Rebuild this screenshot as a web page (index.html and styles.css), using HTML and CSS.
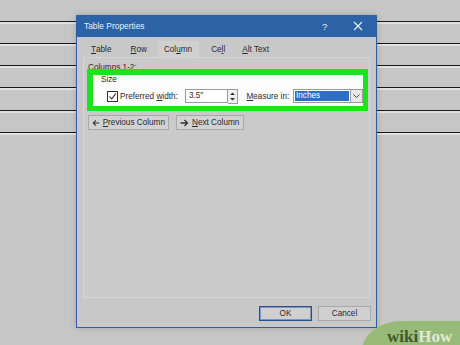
FILE: index.html
```html
<!DOCTYPE html>
<html>
<head>
<meta charset="utf-8">
<link rel="stylesheet" href="styles.css">
</head>
<body>
<div class="page">
  <div class="dialog">
    <div class="titlebar">
      <span class="title">Table Properties</span>
      <span class="tb-help">?</span>
      <span class="tb-close">
        <svg width="10" height="10" viewBox="0 0 10 10"><path d="M1 1L9 9M9 1L1 9" stroke="#e6eef8" stroke-width="1.2" fill="none"/></svg>
      </span>
    </div>
    <div class="tabs">
      <span class="tab t-table"><u>T</u>able</span>
      <span class="tab t-row"><u>R</u>ow</span>
      <span class="tab t-col active">Col<u>u</u>mn</span>
      <span class="tab t-cell">Ce<u>l</u>l</span>
      <span class="tab t-alt"><u>A</u>lt Text</span>
    </div>
    <div class="panel">
      <div class="cols-label">Columns 1-2:</div>
      <div class="highlight">
        <div class="size-label">Size</div>
        <div class="size-row">
          <span class="checkbox">
            <svg width="9" height="9" viewBox="0 0 9 9"><path d="M1.5 4.5L3.7 7L7.8 1.5" stroke="#222" stroke-width="1.1" fill="none"/></svg>
          </span>
          <span class="lbl-pref">Preferred <u>w</u>idth:</span>
          <span class="input">3.5"</span>
          <span class="spinner">
            <svg width="9" height="13" viewBox="0 0 9 13"><path d="M2 5L4.5 2.5L7 5Z M2 8L4.5 10.5L7 8Z" fill="#333"/></svg>
          </span>
          <span class="lbl-measure"><u>M</u>easure in:</span>
          <span class="select"><span class="sel-text">Inches</span></span>
          <span class="dropbtn">
            <svg width="9" height="6" viewBox="0 0 9 6"><path d="M1.5 1.5L4.5 4.5L7.5 1.5" stroke="#444" stroke-width="1" fill="none"/></svg>
          </span>
        </div>
      </div>
      <div class="nav-row">
        <span class="navbtn prev">
          <svg width="9" height="8" viewBox="0 0 9 8"><path d="M8.5 4H1.5M4.5 1L1.5 4L4.5 7" stroke="#333" stroke-width="1.3" fill="none"/></svg>
          <span><u>P</u>revious Column</span>
        </span>
        <span class="navbtn next">
          <svg width="9" height="8" viewBox="0 0 9 8"><path d="M0.5 4H7.5M4.5 1L7.5 4L4.5 7" stroke="#333" stroke-width="1.3" fill="none"/></svg>
          <span><u>N</u>ext Column</span>
        </span>
      </div>
    </div>
    <div class="footer">
      <span class="btn ok">OK</span>
      <span class="btn cancel">Cancel</span>
    </div>
  </div>
</div>
<div class="logo"><span class="wiki">wiki</span><span class="how">How</span></div>
</body>
</html>
```

FILE: styles.css
```css
html, body {
  margin: 0;
  padding: 0;
}
body {
  width: 460px;
  height: 345px;
  overflow: hidden;
  position: relative;
  font-family: "Liberation Sans", Arial, sans-serif;
  font-size: 8.2px;
  color: #2a2a2a;
  white-space: nowrap;
  background-color: #c6c6c6;
  background-image:
    linear-gradient(to bottom, #1a1a1a 0, #1a1a1a 1.4px, #e0e0e0 1.4px, #e0e0e0 2.2px),
    linear-gradient(to bottom, #1a1a1a 0, #1a1a1a 1.4px, #e0e0e0 1.4px, #e0e0e0 2.2px),
    linear-gradient(to bottom, #1a1a1a 0, #1a1a1a 1.4px, #e0e0e0 1.4px, #e0e0e0 2.2px),
    linear-gradient(to bottom, #1a1a1a 0, #1a1a1a 1.4px, #e0e0e0 1.4px, #e0e0e0 2.2px),
    linear-gradient(to bottom, #1a1a1a 0, #1a1a1a 1.4px, #e0e0e0 1.4px, #e0e0e0 2.2px),
    linear-gradient(to bottom, #1a1a1a 0, #1a1a1a 1.4px, #e0e0e0 1.4px, #e0e0e0 2.2px);
  background-size: 460px 3px;
  background-repeat: no-repeat;
  background-position: 0 21px, 0 43px, 0 65px, 0 87px, 0 110px, 0 132px;
}
.page {
  padding: 15px 0 0 76px;
}
.dialog {
  width: 299px;
  height: 312px;
  background: #c8c8c8;
  border: 1px solid #2c5f9c;
  border-top: none;
  display: flex;
  flex-direction: column;
  box-shadow: 0 0 6px rgba(0,0,0,0.18);
}
.titlebar {
  height: 22px;
  background: #2b63a6;
  display: flex;
  align-items: center;
  color: #e8eef6;
  font-size: 8.4px;
  padding: 0 0 0 7px;
}
.title {
  flex: 1;
}
.tb-help {
  width: 10px;
  font-size: 9.5px;
  margin-right: 21px;
}
.tb-close {
  display: flex;
  margin-right: 13px;
}
.tabs {
  height: 20px;
  display: flex;
  align-items: flex-end;
  padding-left: 5px;
}
.tab {
  height: 15px;
  display: flex;
  align-items: center;
  color: #2a2a2a;
}
.t-table { margin-left: 9px; }
.t-row { margin-left: 19px; }
.t-col {
  margin-left: 11px;
  padding: 0 7px 0 6px;
  background: #d0d0d0;
  height: 16px;
}
.t-cell { margin-left: 12px; }
.t-alt { margin-left: 17px; }
.panel {
  margin: 0 6px 0 6px;
  height: 241px;
  background: #cacaca;
  border: 1px solid #d6d6d6;
  box-sizing: border-box;
  display: flex;
  flex-direction: column;
  padding: 0 0 0 3px;
}
.cols-label {
  margin: 5px 0 0 1px;
  line-height: 10px;
  height: 6px;
}
.highlight {
  width: 270px;
  height: 31px;
  border: 6px solid #1fe21f;
  border-bottom-width: 5px;
  border-right-width: 5px;
  background: #fdfdfd;
  display: flex;
  flex-direction: column;
}
.size-label {
  margin: 0 0 0 8px;
  line-height: 10px;
  height: 12px;
}
.size-row {
  display: flex;
  align-items: center;
  height: 14px;
  margin-top: 2px;
}
.checkbox {
  width: 9px;
  height: 9px;
  border: 1px solid #333;
  margin-left: 14px;
  display: flex;
  background: #fff;
}
.lbl-pref {
  margin-left: 2px;
  width: 67px;
}
.input {
  width: 39px;
  height: 12px;
  border: 1px solid #9a9a9a;
  background: #fff;
  line-height: 12px;
  padding-left: 3px;
}
.spinner {
  width: 10px;
  height: 13px;
  border: 1px solid #9a9a9a;
  border-left: none;
  background: #f0f0f0;
  display: flex;
}
.lbl-measure {
  margin-left: 8px;
  width: 48px;
}
.select {
  width: 56px;
  height: 12px;
  border: 1px solid #9a9a9a;
  background: #fff;
  display: flex;
  align-items: center;
  padding: 0 1px;
}
.sel-text {
  display: block;
  width: 100%;
  height: 10px;
  background: #2e6fc4;
  color: #fff;
  line-height: 10px;
  padding-left: 1px;
}
.dropbtn {
  width: 11px;
  height: 12px;
  border: 1px solid #9a9a9a;
  border-left: none;
  background: #e8e8e8;
  display: flex;
  align-items: center;
  justify-content: center;
}
.nav-row {
  display: flex;
  margin-top: 4px;
  padding-left: 1px;
}
.navbtn {
  height: 13px;
  border: 1px solid #a8a8a8;
  background: #d2d2d2;
  display: flex;
  align-items: center;
  padding: 0 3px;
  gap: 3px;
}
.prev { width: 73px; }
.next { width: 60px; margin-left: 7px; }
.footer {
  flex: 1;
  display: flex;
  justify-content: flex-end;
  align-items: flex-start;
  padding: 8px 5px 0 0;
  gap: 6px;
}
.btn {
  width: 51px;
  height: 13px;
  border: 1px solid #a8a8a8;
  background: #d0d0d0;
  display: flex;
  align-items: center;
  justify-content: center;
}
.ok {
  border-color: #2f4f8a;
  box-shadow: inset 0 0 0 1px #7c94c2;
}
.logo {
  position: absolute;
  left: 362px;
  top: 321px;
  width: 110px;
  height: 40px;
  background: #98ba78;
  border-top-left-radius: 40px 30px;
  font-family: "Liberation Serif", serif;
  font-weight: bold;
  font-size: 17px;
  line-height: 16px;
  padding: 8px 0 0 25px;
  box-sizing: border-box;
}
.wiki { color: #3f5a2b; }
.how { color: #dfe9d4; }
```
